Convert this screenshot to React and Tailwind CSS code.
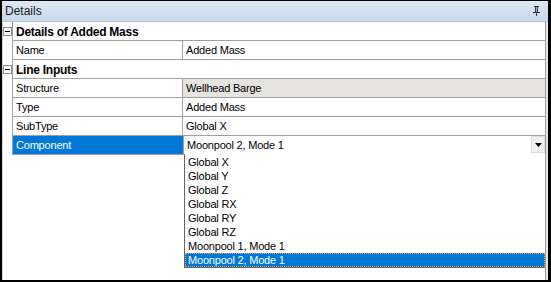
import React from "react";

// property grid with an open combo list under "Component"
const rows = [
  { type: "cat", label: "Details of Added Mass" },
  { type: "prop", name: "Name", value: "Added Mass" },
  { type: "cat", label: "Line Inputs" },
  { type: "prop", name: "Structure", value: "Wellhead Barge", readOnly: true },
  { type: "prop", name: "Type", value: "Added Mass" },
  { type: "prop", name: "SubType", value: "Global X" },
];

const options = [
  "Global X",
  "Global Y",
  "Global Z",
  "Global RX",
  "Global RY",
  "Global RZ",
  "Moonpool 1, Mode 1",
  "Moonpool 2, Mode 1",
];

const MinusBox = () => (
  <div className="w-[9px] h-[9px] border border-[#8c8c8c] bg-white flex items-center justify-center">
    <div className="w-[5px] h-px bg-black" />
  </div>
);

const PinIcon = () => (
  <svg width="7" height="10" viewBox="0 0 7 10">
    <rect x="1" y="0" width="5" height="1" fill="#1c2a4a" />
    <rect x="2" y="1" width="1" height="5" fill="#2c3e78" />
    <rect x="3" y="1" width="1" height="5" fill="#e0b040" />
    <rect x="4" y="1" width="1" height="5" fill="#2c3e78" />
    <rect x="0" y="6" width="7" height="1" fill="#1c2a4a" />
    <rect x="3" y="7" width="1" height="3" fill="#3a3a3a" />
  </svg>
);

const App = () => {
  return (
    <div className="w-[551px] h-[282px] bg-black pt-px pl-[2px] pr-[3px] pb-[2px] font-['Liberation_Sans',Arial,sans-serif] text-[11px] tracking-[-0.2px] text-black">
      <div className="w-full h-full flex flex-col bg-white">
        {/* title bar */}
        <div className="h-[21px] shrink-0 flex items-center justify-between pl-[2px] pr-[8px] bg-gradient-to-b from-[#dde8f4] to-[#c9d9eb] border-b border-[#b4c2d2] border-l border-l-[#d4d8dc]">
          <span className="text-[12px] tracking-normal text-[#1b1b1b]">Details</span>
          <PinIcon />
        </div>

        {/* grid */}
        <div className="flex-1 border-r-2 border-[#e2e2e2]">
          <div className="h-full border-l border-[#d4d4d4] border-r border-r-[#a0a0a0] flex flex-col">
            {rows.map((r, i) =>
              r.type === "cat" ? (
                <div key={i} className="flex h-[19px]">
                  <div className="w-[9px] flex items-center">
                    <MinusBox />
                  </div>
                  <div className="flex-1 border-l border-b border-[#a0a0a0] pl-[3px] pt-px flex items-center font-bold text-[12px] tracking-[-0.25px]">
                    {r.label}
                  </div>
                </div>
              ) : (
                <div key={i} className="flex h-[19px]">
                  <div className="w-[9px]" />
                  <div className="flex-1 flex border-l border-b border-[#a0a0a0]">
                    <div className="w-[170px] border-r border-[#a0a0a0] pl-[3px] pt-px flex items-center">
                      {r.name}
                    </div>
                    <div
                      className={`flex-1 pl-[3px] pt-px flex items-center ${
                        r.readOnly ? "bg-[#e6e4e1]" : "bg-white"
                      }`}
                    >
                      {r.value}
                    </div>
                  </div>
                </div>
              )
            )}

            {/* Component row, selected, with open drop-down */}
            <div className="flex h-[19px]">
              <div className="w-[9px]" />
              <div className="flex-1 flex border-l border-[#a0a0a0]">
                <div className="w-[170px] bg-[#0078d7] text-white pl-[3px] pt-px flex items-center border-b border-[#a0a0a0]">
                  Component
                </div>
                <div className="w-px bg-[#a0a0a0]" />
                <div className="relative flex-1 flex items-center bg-white border-b border-[#646464]">
                  <span className="pl-[3px] pt-px flex-1">Moonpool 2, Mode 1</span>
                  <div className="w-[14px] h-[17px] mb-px bg-[#f0f0f0] border border-[#dcdcdc] flex items-center justify-center">
                    <svg width="7" height="4" viewBox="0 0 7 4">
                      <polygon points="0,0 7,0 3.5,4" fill="#000" />
                    </svg>
                  </div>

                  <div className="absolute left-0 top-full w-full bg-white border-l border-b border-[#646464] pt-px">
                    {options.map((o) =>
                      o === "Moonpool 2, Mode 1" ? (
                        <div
                          key={o}
                          className="h-[14px] flex items-center pl-[2px] bg-[#0078d7] text-white border border-dotted border-[#f0a040]"
                        >
                          {o}
                        </div>
                      ) : (
                        <div key={o} className="h-[14px] flex items-center pl-[3px]">
                          {o}
                        </div>
                      )
                    )}
                  </div>
                </div>
              </div>
            </div>
          </div>
        </div>
      </div>
    </div>
  );
};

export default App;
